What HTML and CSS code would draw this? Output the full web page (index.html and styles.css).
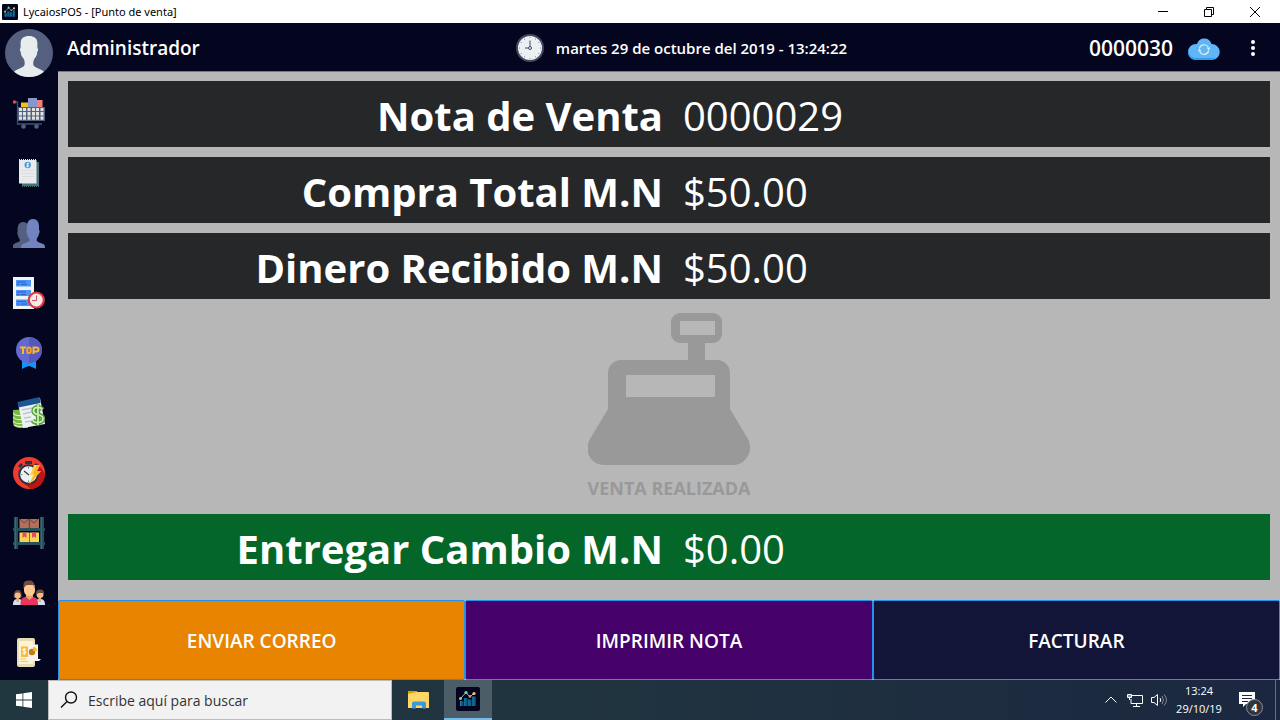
FILE: index.html
```html
<!DOCTYPE html>
<html lang="es">
<head>
<meta charset="utf-8">
<meta name="viewport" content="width=device-width, initial-scale=1">
<title>LycaiosPOS - [Punto de venta]</title>
<link rel="stylesheet" href="styles.css">
</head>
<body>
<svg class="defs" aria-hidden="true">
  <symbol id="logo" viewBox="0 0 24 24">
    <rect width="24" height="24" rx="2" fill="#04041f"/>
    <path d="M4 14h3.500v5H4zM8.300 11h3.200v8H8.300zM12.300 12.500h3.200V19h-3.200zM16.300 9.500h3.400V19h-3.400z" fill="#0b5a86"/>
    <path d="M4.500 14v5M8.800 11v8M12.800 12.500V19M17 9.500V19" stroke="#1787a6" stroke-width="1" fill="none"/>
    <path d="M4.500 11.500 10 5.500l4 4.500 4-4" fill="none" stroke="#9db5b5"/>
    <circle cx="4.500" cy="11.500" r="1.500" fill="#7ee08a"/><circle cx="10" cy="5.500" r="1.600" fill="#6fe0a0"/>
    <circle cx="14" cy="9.500" r="1.400" fill="#e8806a"/><circle cx="18" cy="6.500" r="1.600" fill="#f3c476"/>
  </symbol>
</svg>

<header class="titlebar">
  <svg class="titlebar-logo" aria-hidden="true"><use href="#logo"/></svg>
  <span class="titlebar-text">LycaiosPOS - [Punto de venta]</span>
  <div class="window-controls">
    <button type="button" aria-label="Minimizar"><svg viewBox="0 0 12 12"><path d="M1 5.500h10"/></svg></button>
    <button type="button" aria-label="Restaurar"><svg viewBox="0 0 12 12"><path d="M1.500 3.500h7v7h-7zM3.500 3V1.500h7v7H9"/></svg></button>
    <button type="button" aria-label="Cerrar"><svg viewBox="0 0 12 12"><path d="m1 1 10 10M11 1 1 11"/></svg></button>
  </div>
</header>

<div class="app">
  <nav class="sidebar" aria-label="Módulos">
    <button type="button" class="avatar" aria-label="Perfil">
      <svg viewBox="0 0 48 48"><circle cx="24" cy="24" r="24" fill="#556080"/><path d="M9 42.700c2-2 7-3.700 9.500-5.200 2-1.400 1.300-5.500 0-8-2-2-2.500-4-2.900-7-1-.8-.9-3 0-3.500V14c.2-5 3.400-7 8.400-7s8.200 2 8.400 7v5c.9.500 1 2.700 0 3.500-.4 3-.9 5-2.900 7-1.300 2.500-2 6.600 0 8 2.500 1.500 7.500 3.200 9.500 5.200C35 46.200 30 48 24 48S13 46.200 9 42.700z" fill="#e7eced"/></svg>
    </button>
    <button type="button" class="module" aria-label="Ventas">
      <svg viewBox="0 0 32 32"><path d="M8 5.500h7V10H8z" fill="#f3c219"/><path d="M15 1h9v9h-9z" fill="#8697cb"/><path d="M24 3h5.500v7H24z" fill="#fb7b76"/><path d="M1.500 5H4.500v22H29" fill="none" stroke="#43506e" stroke-width="1.300"/><circle cx="1.500" cy="5" r="1.700" fill="#dd5145"/><path d="M5 10h27v14H5z" fill="#556080"/><path d="M6 11h3v3H6zm4 0h3v3h-3zm4.500 0h3v3h-3zm4.500 0h3v3h-3zm4 0h3v3h-3zm4.500 0h3v3h-3zM6 15h3v3.500H6zm4 0h3v3.500h-3zm4.500 0h3v3.500h-3zm4.500 0h3v3.500h-3zm4 0h3v3.500h-3zm4.500 0h3v3.500h-3zM6 19.500h3v3.300H6zm4 0h3v3.300h-3zm4.500 0h3v3.300h-3zm4.500 0h3v3.300h-3zm4 0h3v3.300h-3zm4.500 0h3v3.300h-3z" fill="#dfe2df"/><circle cx="10.500" cy="29.500" r="2.300" fill="#556080"/><circle cx="23.500" cy="29.500" r="2.300" fill="#556080"/></svg>
    </button>
    <button type="button" class="module" aria-label="Notas">
      <svg viewBox="0 0 32 32"><path d="M9 5h17v24H9z" fill="#48727a"/><path d="M9 29.300h17" stroke="#48727a" stroke-width="1.500" stroke-dasharray="1 1"/><path d="M6 3h17.500v23.500H6z" fill="#e9eaec"/><path d="M6 2.600h17.500" stroke="#e9eaec" stroke-width="1.300" stroke-dasharray="1 1"/><circle cx="14.700" cy="8" r="3.200" fill="#4a9bd6"/><path d="M16 6.700c-2-1-3 .7-1.300 1.300s.8 2.200-1.400 1.400M14.700 5.700v4.700" fill="none" stroke="#fff" stroke-width=".8"/><path d="M8.500 13.500H21M8.500 16.500H21M8.500 19.500H21M8.500 23H12" stroke="#dcdee1"/></svg>
    </button>
    <button type="button" class="module" aria-label="Clientes">
      <svg viewBox="0 0 32 32"><path d="M0 31v-3c2-2.500 6-2.500 7-4.500 0-2-2-3-2.300-6-.7-1-.5-2 0-2.500C4 9 6 5 10 5s6 3 6 8v18z" fill="#556080"/><path d="M8 31c0-3 1-4 3-4.500 2-.7 5-1.700 5.300-3 .3-3-2-3.500-2.300-7-1-1.500-.8-3 0-3.500-.5-7 1-11 6-11s6.500 4 6 11c.8.500 1 2 0 3.500-.3 3.500-2.600 4-2.300 7 .3 1.300 3.300 2.300 5.300 3 2 .5 3 1.500 3 4.500z" fill="#7383bf"/></svg>
    </button>
    <button type="button" class="module" aria-label="Historial">
      <svg viewBox="0 0 32 32"><path d="M0 0h21v32H0z" fill="#f3f3f3"/><path d="M3 3h15v6.500H3zm0 10h15v6H3zm0 9.500h15v6.500H3z" fill="#4d94ff"/><path d="M4 7.300h2.500m1.500 0h6M4 5h9M4 17.500h2.500m1.500 0h5M4 15h9M4 27h2.500m1.500 0h6M4 24.500h9" stroke="#2563bd"/><circle cx="23.300" cy="23" r="7.500" fill="#f8e9e9" stroke="#de3b3f" stroke-width="2.200"/><path d="M23.500 18.500v5H19" fill="none" stroke="#c5545a"/></svg>
    </button>
    <button type="button" class="module" aria-label="Más vendidos">
      <svg viewBox="0 0 32 32"><path d="M9 22h14v10l-4-2-3-1-3 1-4 2z" fill="#1593fb"/><circle cx="16" cy="13" r="13" fill="#6469cf"/><path d="M16 0a13 13 0 0 1 0 26z" fill="#5458bd"/><path d="M7 10.500h6M10 10.500v6.500M20.500 17v-6.500h3a1.800 1.800 0 0 1 0 4h-3" fill="none" stroke="#fdb72b" stroke-width="2"/><rect x="14.300" y="10.500" width="3.400" height="5.500" rx="1.500" fill="none" stroke="#f8a51e" stroke-width="2"/></svg>
    </button>
    <button type="button" class="module" aria-label="Cortes">
      <svg viewBox="0 0 32 32"><path d="M0 13v13c0 3 3 5 9 5h6V12z" fill="#76b843"/><path d="M0 16c2 3 6 3 10 2M0 20c2 3 6 3 11 2M0 24c2 3 6 3 11 2M1 28c3 2 6 2 10 1" fill="none" stroke="#d9efb1" stroke-width="1.200"/><path d="m5 6 22-5 5 26-22 4z" fill="#eef1f1"/><path d="m4.500 5 22-5 1 6-22 4.500z" fill="#1b5792"/><path d="m9 13 10-2M10 17l8-2M11 21l7-1M12 25l7-1" stroke="#bdc6ca" stroke-width="1.500"/><path d="M29.500 12.500c-2-3-9-3-9 1.500 0 5 9.500 2.500 9.500 7.500 0 5-8 5-10.500 2M25 7.500v21" fill="none" stroke="#4f9f3a" stroke-width="4.400"/><path d="M29.500 12.500c-2-3-9-3-9 1.500 0 5 9.500 2.500 9.500 7.500 0 5-8 5-10.500 2M25 8v20" fill="none" stroke="#d3efb4" stroke-width="1.700"/></svg>
    </button>
    <button type="button" class="module" aria-label="Venta rápida">
      <svg viewBox="0 0 32 32"><circle cx="16" cy="16" r="16" fill="#f23b2f"/><path d="m25 7 7 10c0 8-6 15-14 15l-9-7z" fill="#bd1414"/><circle cx="15.500" cy="17.500" r="9.300" fill="#edf1f3" stroke="#293444" stroke-width="2"/><path d="M12 4h7v3h-7zM5 9l3-3 2 2-3 3zM23 6l3 3-2 2-3-3z" fill="#293444"/><path d="m11 14 5 4" stroke="#293444" stroke-width="1.200"/><path d="M15.500 10v1.500M8 17.500h1.500M15.500 25v-1.500" stroke="#738090"/><path d="M21 8h6l-3 6h4L16.500 27l3.500-9h-3z" fill="#ffd13b"/><path d="m24 8 3 0-3 6h4L16.500 27l5.500-10h-2z" fill="#ffae2b"/></svg>
    </button>
    <button type="button" class="module" aria-label="Inventario">
      <svg viewBox="0 0 32 32"><path d="M6.500 2H16v9H6.500zM16.500 2H26v9h-9.500z" fill="#b0705c"/><path d="m7 2 4 4 5-4 5 4 4-4M16.300 2v9" fill="none" stroke="#784639"/><path d="M6.500 15.500H16V25H6.500zM16.500 15.500H26V25h-9.500z" fill="#f6d552"/><path d="M9.500 15.500h4V21l-2-1.500-2 1.500zM19 15.500h4V21l-2-1.500-2 1.500z" fill="#ed4768"/><path d="M1 0h4v32H1zM27 0h4v32h-4zM0 11h32v3H0zM0 25h32v3H0z" fill="#274f5c"/><path d="M2.500 0v32M28.500 0v32" stroke="#376a75"/></svg>
    </button>
    <button type="button" class="module" aria-label="Usuarios">
      <svg viewBox="0 0 32 32"><path d="M0 28c0-5 2-6 5-6s5 1 5 6zM22 28c0-5 2-6 5-6s5 1 5 6z" fill="#d6dff0"/><path d="M1 21c-1-5 1-8 4-8s4 3 3.500 8z" fill="#754b3f"/><circle cx="4.700" cy="18.500" r="3" fill="#f6bd85"/><path d="M3.500 21h2.500v4H3.500zM25.500 20H28v5h-2.500z" fill="#edab72"/><circle cx="27" cy="17.500" r="3.500" fill="#f6bd85"/><path d="M23.200 18c-.8-4 1-5.500 4-5.500s4.500 2 3.700 5.500l-1.500-2h-4z" fill="#754b3f"/><path d="M7.500 28c0-6 1-7 5-8.300h7.500c4 1.300 5 2.300 5 8.300z" fill="#e83660"/><path d="M13 16h7v4l-3.500 3-3.500-3z" fill="#eaa36c"/><path d="M11 8h11v5c0 8-11 8-11 0z" fill="#ffc891"/><path d="M10.500 12V8c0-4 3-4.500 6-4.500s5.700 2 5.200 8.500l-1.500-4h-6l-2 1z" fill="#754b3f"/></svg>
    </button>
    <button type="button" class="module" aria-label="Reportes">
      <svg viewBox="0 0 32 32"><rect x="4" y="1" width="18" height="29" rx="2" fill="#e7dcb7"/><path d="M6 4h14v23H6z" fill="#fff3cb"/><path d="M8 9.500h7v10.500H8z" fill="#f6bc3d"/><path d="M13 12.500c-3-1.500-4 .8-1.700 1.700s1.300 3.300-1.800 1.800M11.300 11v7" fill="none" stroke="#fff4d1" stroke-width="1.200"/><path d="M7 22h6M7 24.500h8" stroke="#dcca98"/><path d="M16 7.500h9V22h3l-2 2H15V8z" fill="#f6f1e9"/><circle cx="19" cy="15" r="3.200" fill="#bd7d17"/><path d="M20 14v-4a4 4 0 0 1 4 4z" fill="#f5b52c"/></svg>
    </button>
  </nav>

  <section class="workspace">
    <header class="topbar">
      <span class="user">Administrador</span>
      <div class="clock">
        <svg viewBox="0 0 28 28" aria-hidden="true"><circle cx="14" cy="14" r="13" fill="#ebf0f2" stroke="#424a60" stroke-width="2"/><path d="M14 6.500V12M9 14h3" stroke="#424a60"/><circle cx="14" cy="14" r="1.500" fill="none" stroke="#424a60"/><path d="M14 3v1M14 24v1M3 14h1M24 14h1M8.500 4.700v1M19.500 4.700v1M4.700 8.500h1M22.300 8.500h1M4.700 19.500h1M22.300 19.500h1M8.500 22.300v1M19.500 22.300v1" stroke="#7d8fd0"/></svg>
        <time datetime="2019-10-29T13:24:22">martes 29 de octubre del 2019 - 13:24:22</time>
      </div>
      <div class="status">
        <span class="folio">0000030</span>
        <button type="button" class="cloud" aria-label="Sincronizar"><svg viewBox="0 0 32 24"><path d="M8 24a8 8 0 0 1 0-16 3 3 0 0 1 1 0 7.500 7.500 0 0 1 14.500 0A8 8 0 0 1 24 24z" fill="#5fb5f5"/><path d="M2 11c-3 7 1 11 6 11h20l-4 2H8c-5 0-9-5-8-9z" fill="#309df0"/><g fill="none" stroke="#d8effe" stroke-width="1.200"><path d="M11.300 12.500a5 5 0 0 1 9-1.500M20.800 14.500a5 5 0 0 1-9 1.700"/></g><path d="m18.500 11.500 4 0-1.800 3zM9.800 15.500h3.900L11.500 12.500z" fill="#d8effe"/></svg></button>
        <button type="button" class="more" aria-label="Más opciones"><svg viewBox="0 0 6 18"><circle cx="3" cy="3" r="2"/><circle cx="3" cy="9" r="2"/><circle cx="3" cy="15" r="2"/></svg></button>
      </div>
    </header>

    <main class="sale">
      <dl class="totals">
        <div class="row"><dt>Nota de Venta</dt><dd>0000029</dd></div>
        <div class="row"><dt>Compra Total M.N</dt><dd>$50.00</dd></div>
        <div class="row"><dt>Dinero Recibido M.N</dt><dd>$50.00</dd></div>
      </dl>
      <div class="done">
        <svg viewBox="0 0 162 152" aria-hidden="true"><path fill-rule="evenodd" d="M92 0h33a9 9 0 0 1 9 9v12a9 9 0 0 1-9 9h-8v17h12a13 13 0 0 1 13 13v36l18 30c6 12-2 26-15 26H16C3 152-5 138 2 126l18-30V60a13 13 0 0 1 13-13h67V30h-8a9 9 0 0 1-9-9V9a9 9 0 0 1 9-9zM92 8v14h35V8zM38 62v22h89V62z"/></svg>
        <p>VENTA REALIZADA</p>
      </div>
      <dl class="totals">
        <div class="row change"><dt>Entregar Cambio M.N</dt><dd>$0.00</dd></div>
      </dl>
    </main>

    <div class="actions">
      <button type="button" class="mail">ENVIAR CORREO</button>
      <button type="button" class="print">IMPRIMIR NOTA</button>
      <button type="button" class="invoice">FACTURAR</button>
    </div>
  </section>
</div>

<footer class="taskbar">
  <button type="button" class="start" aria-label="Inicio"><svg viewBox="0 0 16 16"><path d="m0 2.300 6.500-.9v6.200H0zM7.300 1.200 16 0v7.600H7.300zM0 8.400h6.500v6.200L0 13.700zM7.300 8.400H16V16l-8.700-1.200z"/></svg></button>
  <label class="search">
    <svg viewBox="0 0 18 18" aria-hidden="true"><circle cx="11" cy="6.500" r="5.500"/><path d="m7 10.500-6 6"/></svg>
    <input type="text" placeholder="Escribe aquí para buscar" aria-label="Buscar">
  </label>
  <button type="button" class="task" aria-label="Explorador de archivos"><svg viewBox="0 0 24 24"><path d="M2 3h9v3H2z" fill="#e0a000"/><path d="M2 6l9-2h11q1 0 1 1v15H2z" fill="#ffd767"/><path d="M6 20.500v-5q0-2 2-2h10q2 0 2 2v5h-4v-3h-6v3z" fill="#3f97d6"/></svg></button>
  <button type="button" class="task active" aria-label="LycaiosPOS"><svg><use href="#logo"/></svg></button>
  <div class="tray">
    <button type="button" aria-label="Iconos ocultos"><svg class="small" viewBox="0 0 16 16"><path d="m2.500 10.500 5.500-5.500 5.500 5.500"/></svg></button>
    <button type="button" aria-label="Red"><svg class="small" viewBox="0 0 16 16"><path d="M5 3.500h10.500v8H4V7M9.500 12v2.500M6 14.500h7M.5 2.500h4v3h-4zM2.500 5.500V8M1 4h3"/></svg></button>
    <button type="button" aria-label="Volumen"><svg class="small" viewBox="0 0 16 16"><path d="M.5 5.500H3l3.500-3v11L3 10.500H.5zM9 6q1.500 2 0 4"/><path d="M11 4q3 4 0 8M13 2.500q5 5.500 0 11" opacity=".45"/></svg></button>
    <div class="datetime"><time>13:24</time><time>29/10/19</time></div>
    <button type="button" class="notices" aria-label="Notificaciones"><svg viewBox="0 0 16 16"><path d="M0 0h16v12H7l-3 3v-3H0z" fill="#fff"/><path d="M3 3.500h10M3 6.500h10M3 9.500h6" stroke="#1b2940"/></svg><span class="badge">4</span></button>
    <span class="desktop-edge"></span>
  </div>
</footer>
</body>
</html>
```
FILE: styles.css
```css
* { box-sizing: border-box; }

body {
  margin: 0;
  min-height: 100vh;
  display: flex;
  flex-direction: column;
  font-family: "Open Sans", "Noto Sans", sans-serif;
  color: #fff;
  background: #040620;
}

button {
  padding: 0;
  border: 0;
  background: none;
  color: inherit;
  font: inherit;
}

svg { display: block; }
dl, dd, p { margin: 0; }

.defs { position: absolute; width: 0; height: 0; }

.titlebar {
  height: 23px;
  display: flex;
  align-items: center;
  padding-left: 2px;
  background: #fff;
  color: #000;
}
.titlebar-logo { width: 16px; height: 16px; margin-right: 5px; }
.titlebar-text { font-family: "Noto Sans", sans-serif; font-size: 11px; }
.window-controls { display: flex; margin-left: auto; padding-right: 2px; }
.window-controls button {
  width: 46px;
  height: 22px;
  display: grid;
  place-items: center;
}
.window-controls svg {
  width: 12px;
  height: 12px;
  fill: none;
  stroke: #000;
}

.app { flex: 1; display: flex; }

.sidebar {
  width: 58px;
  display: flex;
  flex-direction: column;
  align-items: center;
  gap: 28px;
  padding-top: 6px;
}
.avatar { margin-bottom: -8px; }
.avatar svg { width: 48px; height: 48px; }
.module svg { width: 32px; height: 32px; }

.workspace {
  flex: 1;
  display: flex;
  flex-direction: column;
  background: #b7b7b7;
}

.topbar {
  height: 49px;
  display: grid;
  grid-template-columns: 1fr auto 1fr;
  align-items: center;
  padding: 1px 24px 0 9px;
  background: #040620;
  border-bottom: 1px solid #777786;
  font-weight: 600;
}
.user { font-size: 19px; }
.clock {
  display: flex;
  align-items: center;
  gap: 12px;
  margin-left: 40px;
  font-size: 15px;
}
.clock svg { width: 28px; height: 28px; }
.status { display: flex; align-items: center; justify-content: flex-end; }
.folio { font-size: 21px; }
.cloud { margin: 0 30px 0 15px; }
.cloud svg { width: 32px; height: 24px; }
.more svg { width: 6px; height: 18px; fill: #fff; }

.sale {
  flex: 1;
  display: flex;
  flex-direction: column;
  padding: 9px 10px 20px;
}
.totals { display: grid; gap: 10px; }
.row {
  height: 66px;
  display: grid;
  grid-template-columns: 1fr 1fr;
  align-items: center;
  padding-top: 4px;
  background: #252729;
  font-size: 40px;
  line-height: 54px;
  white-space: nowrap;
}
.row dt { padding-right: 6px; text-align: right; font-weight: 700; }
.row dd { padding-left: 14px; font-weight: 400; }
.change { background: #046629; }

.done {
  flex: 1;
  display: flex;
  flex-direction: column;
  align-items: center;
  justify-content: center;
  gap: 11px;
  color: #999;
  font-size: 18px;
  line-height: 24px;
  font-weight: 700;
}
.done svg { width: 162px; height: 152px; fill: #999; }

.actions { display: grid; grid-template-columns: repeat(3, 1fr); }
.actions button {
  height: 80px;
  padding-top: 2px;
  border: 1px solid #2491ed;
  border-radius: 2px;
  font-size: 19px;
  font-weight: 600;
}
.mail { background: #e88400; }
.print { background: #450069; }
.invoice { background: #121538; }

.taskbar {
  height: 40px;
  display: flex;
  background: linear-gradient(90deg, #21373f 0%, #20343f 45%, #1b2740 100%);
}
.start { width: 48px; display: grid; place-items: center; }
.start svg { width: 16px; height: 16px; fill: #fff; }
.search {
  width: 344px;
  display: flex;
  align-items: center;
  gap: 10px;
  padding: 0 11px;
  background: #f2f2f2;
  border: 1px solid #bcbcbc;
}
.search svg { width: 18px; height: 18px; fill: none; stroke: #111; stroke-width: 1.400; }
.search input {
  flex: 1;
  min-width: 0;
  padding: 0;
  border: 0;
  background: none;
  font: 14px "Open Sans", sans-serif;
}
.search input::placeholder { color: #333; opacity: 1; }
.task { width: 52px; display: grid; place-items: center; }
.task svg { width: 24px; height: 24px; }
.task.active {
  width: 48px;
  background: #4b5d66;
  border-bottom: 2px solid #76b9ed;
}
.tray { margin-left: auto; display: flex; align-items: center; gap: 8px; }
.small { width: 16px; height: 16px; fill: none; stroke: #fff; }
.datetime {
  width: 48px;
  display: grid;
  text-align: center;
  font-size: 11px;
  line-height: 18px;
}
.notices { position: relative; margin: 0 12px 0 8px; }
.notices svg { width: 16px; height: 16px; }
.badge {
  position: absolute;
  left: 7px;
  top: 7px;
  width: 17px;
  height: 17px;
  border: 1px solid #8b8f96;
  border-radius: 50%;
  background: #30343d;
  font-size: 11px;
  line-height: 15px;
  font-weight: 700;
}
.desktop-edge { align-self: stretch; width: 5px; border-left: 1px solid #68717f; }
```
